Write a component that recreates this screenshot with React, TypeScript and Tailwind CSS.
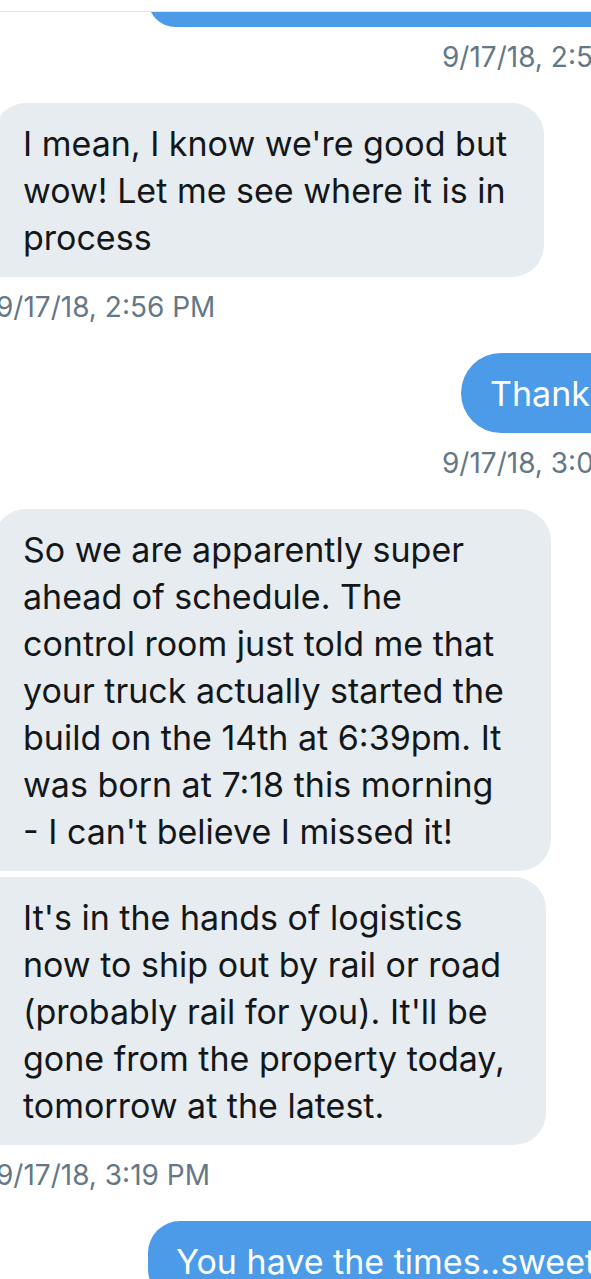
const fontStack = "font-['Inter','Liberation_Sans',sans-serif]";

function Stamp({ text, side }: { text: string; side: "left" | "right" }) {
  return (
    <div
      className={`mt-[14px] h-[32px] shrink-0 whitespace-nowrap text-[28px] leading-[32px] text-[#657786] ${
        side === "right" ? "ml-[448px]" : "ml-[2px]"
      }`}
    >
      {text}
    </div>
  );
}

function Incoming({
  lines,
  width,
  corners,
  className = "",
}: {
  lines: string[];
  width: string;
  corners: string;
  className?: string;
}) {
  return (
    <div
      className={`${width} ${corners} ${className} shrink-0 bg-[#e6ecf0] px-[29px] pt-[17px] pb-[16px] text-[34px] leading-[47px] text-[#14171a]`}
    >
      {lines.map((line) => (
        <div key={line} className="whitespace-nowrap">
          {line}
        </div>
      ))}
    </div>
  );
}

export default function App() {
  return (
    <div className={`w-[591px] h-[1279px] overflow-hidden bg-white ${fontStack}`}>
      {/* header edge */}
      <div className="h-[12px] border-b border-[#e1e8ed]" />

      <div className="ml-[-6px] w-[720px] overflow-hidden flex flex-col">
        {/* tail of an earlier sent message */}
        <div className="ml-[154px] -mt-[40px] h-[55px] w-[566px] shrink-0 rounded-[30px] bg-[#4c9be8]" />
        <Stamp side="right" text="9/17/18, 2:56 PM" />

        <Incoming
          className="mt-[30px]"
          width="w-[550px]"
          corners="rounded-[32px] rounded-bl-none"
          lines={["I mean, I know we're good but", "wow! Let me see where it is in", "process"]}
        />
        <Stamp side="left" text="9/17/18, 2:56 PM" />

        {/* sent */}
        <div className="mt-[30px] ml-[467px] w-[253px] shrink-0 rounded-[40px] bg-[#4c9be8] px-[29px] pt-[17px] pb-[16px] text-[34px] leading-[47px] text-white whitespace-nowrap">
          Thank you!
        </div>
        <Stamp side="right" text="9/17/18, 3:05 PM" />

        <Incoming
          className="mt-[30px]"
          width="w-[557px]"
          corners="rounded-[32px] rounded-bl-[6px]"
          lines={[
            "So we are apparently super",
            "ahead of schedule. The",
            "control room just told me that",
            "your truck actually started the",
            "build on the 14th at 6:39pm. It",
            "was born at 7:18 this morning",
            "- I can't believe I missed it!",
          ]}
        />
        <Incoming
          className="mt-[6px]"
          width="w-[552px]"
          corners="rounded-[32px] rounded-tl-[6px] rounded-bl-none"
          lines={[
            "It's in the hands of logistics",
            "now to ship out by rail or road",
            "(probably rail for you). It'll be",
            "gone from the property today,",
            "tomorrow at the latest.",
          ]}
        />
        <Stamp side="left" text="9/17/18, 3:19 PM" />

        <div className="mt-[30px] ml-[154px] w-[566px] shrink-0 rounded-[32px] bg-[#4c9be8] px-[28px] pt-[17px] pb-[16px] text-[34px] leading-[47px] text-white whitespace-nowrap">
          You have the times..sweet!
        </div>
      </div>
    </div>
  );
}
